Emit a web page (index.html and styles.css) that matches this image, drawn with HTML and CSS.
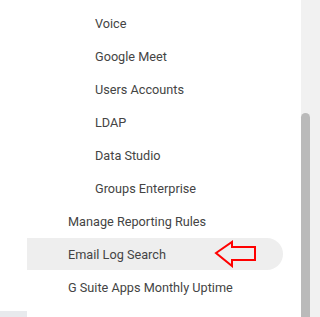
FILE: index.html
```
<!DOCTYPE html>
<html lang="en">
<head>
  <meta charset="UTF-8">
  <meta name="viewport" content="width=device-width, initial-scale=1.0">
  <title>Reports menu</title>
  <link rel="stylesheet" href="styles.css">
</head>
<body>
  <div class="page">
    <nav class="nav">
      <!-- Sub items -->
      <div class="item sub">Voice</div>
      <div class="item sub">Google Meet</div>
      <div class="item sub">Users Accounts</div>
      <div class="item sub">LDAP</div>
      <div class="item sub">Data Studio</div>
      <div class="item sub">Groups Enterprise</div>
      <!-- Top level -->
      <div class="item">Manage Reporting Rules</div>
      <div class="item active">
        <span>Email Log Search</span>
        <svg class="arrow" width="43" height="28" viewBox="0 0 43 28">
          <polygon points="2,13 18,2 18,7 41,7 41,20 18,20 18,26" fill="none" stroke="#ff0000" stroke-width="2" stroke-linejoin="miter"/>
        </svg>
      </div>
      <div class="item">G Suite Apps Monthly Uptime</div>
      <div class="foot"></div>
    </nav>
    <div class="scroll">
      <div class="thumb"></div>
    </div>
  </div>
</body>
</html>
```

FILE: styles.css
```
html, body {
  margin: 0;
  padding: 0;
  height: 100%;
  background: #fff;
  overflow: hidden;
  font-family: Roboto, "Noto Sans", sans-serif;
}
.page {
  display: flex;
  height: 317px;
}
.nav {
  width: 301px;
  padding-top: 7px;
  box-sizing: border-box;
  display: flex;
  flex-direction: column;
}
.item {
  height: 33px;
  flex: none;
  display: flex;
  align-items: center;
  padding-left: 68px;
  font-size: 12.7px;
  color: #444;
  box-sizing: border-box;
}
.item.sub {
  padding-left: 95px;
}
.item.active {
  margin-left: 27px;
  margin-right: 18px;
  padding-left: 41px;
  height: 32px;
  margin-bottom: 1px;
  background: #eeeeee;
  border-radius: 0 16px 16px 0;
}
.arrow {
  margin-left: auto;
  margin-right: 26px;
  display: block;
}
.foot {
  margin-top: 7px;
  width: 27px;
  height: 20px;
  background: #e8eaed;
}
.scroll {
  width: 19px;
  background: #f1f1f1;
  padding-top: 113px;
  box-sizing: border-box;
}
.thumb {
  width: 9px;
  height: 100%;
  background: #bababa;
  border-radius: 5px 5px 0 0;
}
```
